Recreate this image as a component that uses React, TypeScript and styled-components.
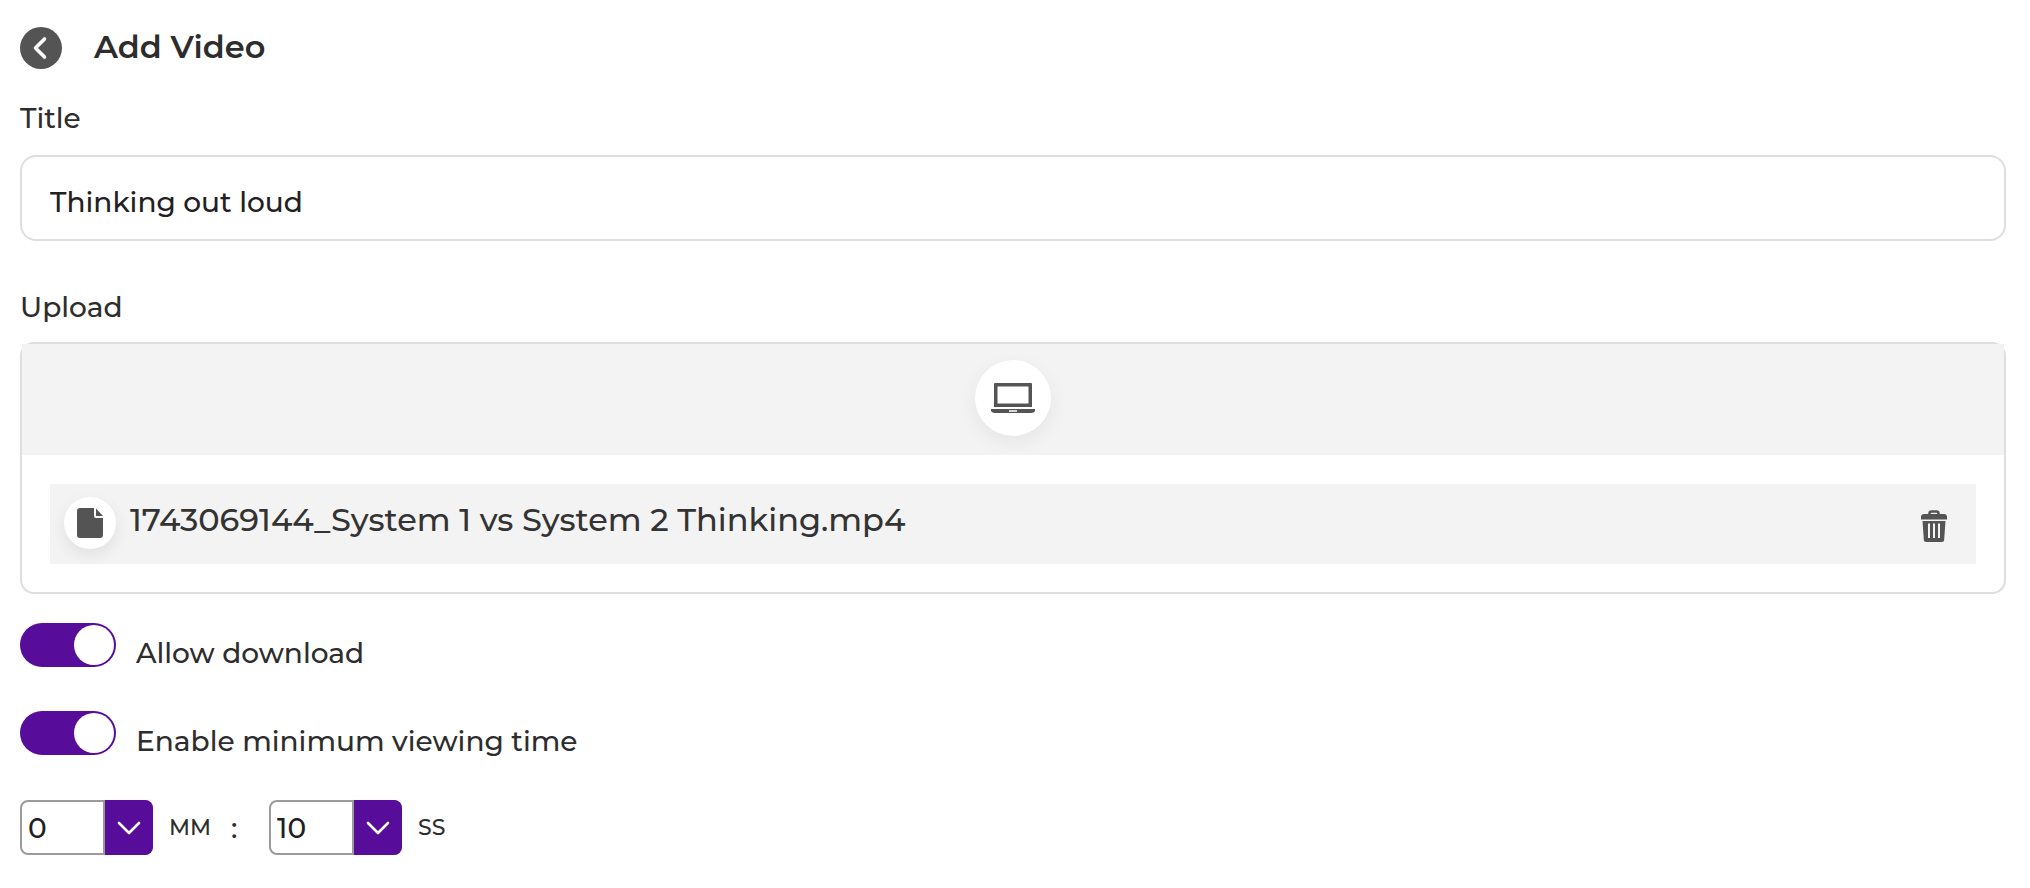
import React, { useState } from "react";
import styled, { createGlobalStyle } from "styled-components";

const GlobalStyle = createGlobalStyle`
  *, *::before, *::after { box-sizing: border-box; }
  body {
    margin: 0;
    background: #fff;
    color: #2d2d2d;
    font-family: Montserrat, Inter, sans-serif;
    font-size: 28px;
    font-weight: 500;
    line-height: 36px;
  }
  button, input, select { font: inherit; color: inherit; margin: 0; }
  svg { display: block; }
`;

const purple = "#570c9a";
const iconGrey = "#545454";

const Page = styled.main`
  padding: 24px 24px 32px 20px;
`;

const Header = styled.header`
  display: flex;
  align-items: center;
  gap: 32px;
  height: 48px;
`;

const BackButton = styled.button`
  display: grid;
  place-items: center;
  width: 42px;
  height: 42px;
  padding: 0;
  border: 0;
  border-radius: 50%;
  background: ${iconGrey};
  cursor: pointer;
`;

const Heading = styled.h1`
  margin: 0;
  padding-bottom: 2px;
  font-size: 32px;
  line-height: 44px;
  font-weight: 600;
`;

const Form = styled.form`
  display: flex;
  flex-direction: column;
`;

const FieldLabel = styled.label`
  display: block;
  margin: 28px 0 19px;
`;

const TextInput = styled.input`
  width: 100%;
  height: 86px;
  padding: 8px 28px 0;
  border: 2px solid #dedede;
  border-radius: 16px;
  background: #fff;
  color: #212121;
  outline: none;
`;

const UploadField = styled.section`
  padding-top: 36px;
  margin: 0;
`;

const UploadLabel = styled.h2`
  margin: 12px 0 17px;
  font-size: inherit;
  font-weight: inherit;
`;

const UploadPanel = styled.div`
  border: 2px solid #dedede;
  border-radius: 14px;
`;

const Sources = styled.div`
  display: flex;
  justify-content: center;
  align-items: flex-start;
  height: 111px;
  padding-top: 16px;
  background: #f3f3f3;
`;

const SourceButton = styled.button`
  display: grid;
  place-items: center;
  width: 76px;
  height: 76px;
  padding: 0;
  border: 0;
  border-radius: 50%;
  background: #fff;
  box-shadow: 0 6px 20px rgba(0, 0, 0, 0.06);
  cursor: pointer;
`;

const FileList = styled.ul`
  margin: 0;
  padding: 29px 28px 28px;
  list-style: none;
`;

const FileRow = styled.li`
  display: flex;
  align-items: center;
  height: 80px;
  padding: 0 28px 2px 14px;
  background: #f3f3f3;
`;

const FileBadge = styled.span`
  display: grid;
  place-items: center;
  flex: none;
  width: 52px;
  height: 52px;
  border-radius: 50%;
  background: #fff;
  box-shadow: 0 6px 16px rgba(0, 0, 0, 0.08);
`;

const FileName = styled.span`
  flex: 1;
  padding: 0 14px 6px;
  color: #333;
  font-size: 32px;
  line-height: 40px;
`;

const DeleteButton = styled.button`
  padding: 6px 0 0;
  border: 0;
  background: none;
  cursor: pointer;
`;

const Toggles = styled.div`
  padding-top: 1px;
`;

const ToggleRow = styled.div`
  display: flex;
  align-items: flex-start;
  gap: 20px;
  height: 60px;
  margin-top: 28px;
`;

const ToggleInput = styled.input`
  appearance: none;
  flex: none;
  display: flex;
  width: 96px;
  height: 44px;
  padding: 2px;
  border-radius: 22px;
  background: #bdbdbd;
  cursor: pointer;

  &::before {
    content: "";
    width: 40px;
    height: 40px;
    border-radius: 50%;
    background: #fff;
  }
  &:checked {
    justify-content: flex-end;
    background: ${purple};
  }
`;

const ToggleLabel = styled.label`
  padding-top: 12px;
`;

const TimeRow = styled.div`
  display: flex;
  align-items: center;
  margin-top: 29px;
`;

const SelectBox = styled.span`
  position: relative;
  width: 133px;
  height: 55px;
`;

const Select = styled.select`
  appearance: none;
  width: 100%;
  height: 100%;
  padding: 0 56px 0 6px;
  border: 2px solid #9b9b9b;
  border-radius: 8px;
  background: #fff;
  color: #212121;
  cursor: pointer;
`;

const SelectArrow = styled.span`
  position: absolute;
  top: 0;
  right: 0;
  bottom: 0;
  display: grid;
  place-items: center;
  width: 50px;
  border-left: 2px solid #9b9b9b;
  border-radius: 0 8px 8px 0;
  background: ${purple};
  pointer-events: none;
`;

const Unit = styled.label`
  margin-left: 16px;
  font-size: 22px;
`;

const Colon = styled.span`
  width: 58px;
  padding-left: 20px;
`;

type ToggleProps = { id: string; label: string; checked: boolean; onChange: (value: boolean) => void };

function Toggle({ id, label, checked, onChange }: ToggleProps) {
  return (
    <ToggleRow>
      <ToggleInput id={id} type="checkbox" checked={checked} onChange={(e) => onChange(e.target.checked)} />
      <ToggleLabel htmlFor={id}>{label}</ToggleLabel>
    </ToggleRow>
  );
}

type TimeSelectProps = { id: string; unit: string; value: number; onChange: (value: number) => void };

function TimeSelect({ id, unit, value, onChange }: TimeSelectProps) {
  return (
    <>
      <SelectBox>
        <Select id={id} value={value} onChange={(e) => onChange(Number(e.target.value))}>
          {Array.from({ length: 60 }, (_, n) => (
            <option key={n} value={n}>{n}</option>
          ))}
        </Select>
        <SelectArrow>
          <svg width="24" height="14" viewBox="0 0 24 14" fill="none" stroke="#fff" strokeWidth="2.6" strokeLinecap="round" strokeLinejoin="round">
            <path d="M2 2l10 10L22 2" />
          </svg>
        </SelectArrow>
      </SelectBox>
      <Unit htmlFor={id}>{unit}</Unit>
    </>
  );
}

const BackIcon = () => (
  <svg width="42" height="42" viewBox="0 0 42 42" fill="none" stroke="#fff" strokeWidth="3.6" strokeLinecap="round" strokeLinejoin="round">
    <path d="M24.5 12L15.5 21L24.5 30" />
  </svg>
);

const LaptopIcon = () => (
  <svg width="46" height="32" viewBox="0 0 46 32">
    <path fill={iconGrey} fillRule="evenodd" d="M5 1h36a1 1 0 0 1 1 1v23H4V2a1 1 0 0 1 1-1zM7.500 4.500v17h31v-17z" />
    <path fill={iconGrey} d="M1 27h44v1.500c0 1.300-1.800 2.500-4 2.500H5c-2.200 0-4-1.200-4-2.500z" />
    <rect x="19" y="28" width="8" height="2" fill="#d5d5d5" />
  </svg>
);

const FileIcon = () => (
  <svg width="26" height="30" viewBox="0 0 26 30" fill={iconGrey}>
    <path d="M3 0h14v8a2 2 0 0 0 2 2h7v17a3 3 0 0 1-3 3H3a3 3 0 0 1-3-3V3a3 3 0 0 1 3-3z" />
    <path d="M19 0.500L26 8h-7z" />
  </svg>
);

const TrashIcon = () => (
  <svg width="28" height="32" viewBox="0 0 28 32">
    <path d="M9.500 5V3.500a2 2 0 0 1 2-2h5a2 2 0 0 1 2 2V5" fill="none" stroke={iconGrey} strokeWidth="2.500" />
    <path fill={iconGrey} d="M4 4h20a3 3 0 0 1 3 3v2.500H1V7a3 3 0 0 1 3-3z" />
    <path fill={iconGrey} fillRule="evenodd" d="M2.500 11h23l-1.300 18.500a2.500 2.500 0 0 1-2.500 2.500H6.300a2.500 2.500 0 0 1-2.500-2.500zM8 13.500v14.500h2V13.500zM13 13.500v14.500h2V13.500zM18 13.500v14.500h2V13.500z" />
  </svg>
);

export default function App() {
  const [title, setTitle] = useState("Thinking out loud");
  const [download, setDownload] = useState(true);
  const [minimum, setMinimum] = useState(true);
  const [minutes, setMinutes] = useState(0);
  const [seconds, setSeconds] = useState(10);

  return (
    <>
      <GlobalStyle />
      <Page>
        <Header>
          <BackButton type="button" aria-label="Back"><BackIcon /></BackButton>
          <Heading>Add Video</Heading>
        </Header>
        <Form onSubmit={(e) => e.preventDefault()}>
          <FieldLabel htmlFor="title">Title</FieldLabel>
          <TextInput id="title" type="text" value={title} onChange={(e) => setTitle(e.target.value)} />
          <UploadField aria-labelledby="upload-label">
            <UploadLabel id="upload-label">Upload</UploadLabel>
            <UploadPanel>
              <Sources>
                <SourceButton type="button" aria-label="Upload from computer"><LaptopIcon /></SourceButton>
              </Sources>
              <FileList>
                <FileRow>
                  <FileBadge><FileIcon /></FileBadge>
                  <FileName>1743069144_System 1 vs System 2 Thinking.mp4</FileName>
                  <DeleteButton type="button" aria-label="Delete file"><TrashIcon /></DeleteButton>
                </FileRow>
              </FileList>
            </UploadPanel>
          </UploadField>
          <Toggles>
            <Toggle id="download" label="Allow download" checked={download} onChange={setDownload} />
            <Toggle id="minimum" label="Enable minimum viewing time" checked={minimum} onChange={setMinimum} />
          </Toggles>
          <TimeRow>
            <TimeSelect id="minutes" unit="MM" value={minutes} onChange={setMinutes} />
            <Colon>:</Colon>
            <TimeSelect id="seconds" unit="SS" value={seconds} onChange={setSeconds} />
          </TimeRow>
        </Form>
      </Page>
    </>
  );
}
